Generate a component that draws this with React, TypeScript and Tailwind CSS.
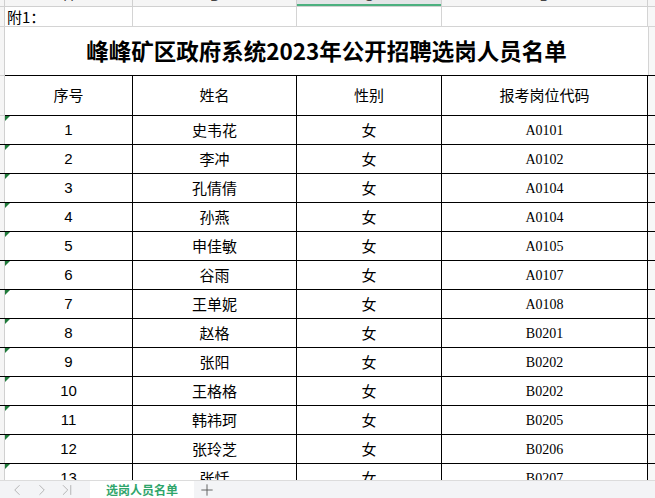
import React from "react";
import { ChevronLeft, ChevronRight, ChevronLast, Plus } from "lucide-react";

type Row = { no: string; name: string; sex: string; code: string };

const rows: Row[] = [
    { no: "1", name: "史韦花", sex: "女", code: "A0101" },
    { no: "2", name: "李冲", sex: "女", code: "A0102" },
    { no: "3", name: "孔倩倩", sex: "女", code: "A0104" },
    { no: "4", name: "孙燕", sex: "女", code: "A0104" },
    { no: "5", name: "申佳敏", sex: "女", code: "A0105" },
    { no: "6", name: "谷雨", sex: "女", code: "A0107" },
    { no: "7", name: "王单妮", sex: "女", code: "A0108" },
    { no: "8", name: "赵格", sex: "女", code: "B0201" },
    { no: "9", name: "张阳", sex: "女", code: "B0202" },
    { no: "10", name: "王格格", sex: "女", code: "B0202" },
    { no: "11", name: "韩祎珂", sex: "女", code: "B0205" },
    { no: "12", name: "张玲芝", sex: "女", code: "B0206" },
    { no: "13", name: "张恬", sex: "女", code: "B0207" },
];

const cjk = "font-['Noto_Sans_CJK_SC',sans-serif]";

const App: React.FC = () => {
    return (
        <div className={`w-[655px] h-[498px] overflow-hidden flex flex-col bg-white text-black ${cjk}`}>
            {/* column letters, scrolled mostly out of view */}
            <div className="flex h-[7px] shrink-0 overflow-hidden border-b border-[#d0d0d0] bg-[#f5f5f5] text-[13px] text-[#444] font-['Liberation_Sans',sans-serif]">
                <div className="w-[5px] border-r border-[#d0d0d0]" />
                <div className="w-[128px] border-r border-[#d0d0d0]"><div className="-mt-[13px] h-[20px] flex items-center justify-center">A</div></div>
                <div className="w-[164px] border-r border-[#d0d0d0]"><div className="-mt-[13px] h-[20px] flex items-center justify-center">B</div></div>
                <div className="w-[145px] border-r border-[#d0d0d0] bg-[#e3e5e7] relative">
                    <div className="-mt-[13px] h-[20px] flex items-center justify-center">C</div>
                    <div className="absolute left-0 right-0 bottom-0 h-[2px] bg-[#4cb07f]" />
                </div>
                <div className="w-[206px] border-r border-[#d0d0d0]"><div className="-mt-[13px] h-[20px] flex items-center justify-center">D</div></div>
                <div className="flex-1" />
            </div>

            {/* row 1 */}
            <div className="flex h-[20px] shrink-0 border-b border-[#d4d4d4]">
                <div className="w-[5px] border-r border-[#d0d0d0] bg-[#f5f5f5]" />
                <div className="w-[128px] border-r border-[#d4d4d4] pl-[2px] text-[15px] leading-[19px]">附1：</div>
                <div className="w-[164px] border-r border-[#d4d4d4]" />
                <div className="w-[145px] border-r border-[#d4d4d4]" />
                <div className="w-[206px] border-r border-[#d4d4d4]" />
                <div className="flex-1 bg-[#f7f7f7]" />
            </div>

            {/* title */}
            <div className="flex h-[48px] shrink-0">
                <div className="w-[5px] border-r border-[#d0d0d0] bg-[#f5f5f5]" />
                <div className="w-[643px] flex items-center justify-center text-[22.5px] font-bold">
                    峰峰矿区政府系统2023年公开招聘选岗人员名单
                </div>
                <div className="flex-1 border-l border-[#d4d4d4] bg-[#f7f7f7]" />
            </div>

            {/* table */}
            <div className="flex-1 overflow-hidden">
                <div className="flex h-[41px] border-y border-black">
                    <div className="w-[5px] -my-px border-y border-[#d0d0d0] border-r bg-[#f5f5f5]" />
                    <div className="w-[128px] border-r border-black flex items-center justify-center text-[15px]">序号</div>
                    <div className="w-[164px] border-r border-black flex items-center justify-center text-[15px]">姓名</div>
                    <div className="w-[145px] border-r border-black flex items-center justify-center text-[15px]">性别</div>
                    <div className="w-[206px] border-r border-black flex items-center justify-center text-[15px]">报考岗位代码</div>
                    <div className="flex-1 bg-[#f7f7f7]" />
                </div>
                {rows.map((r) => (
                    <div key={r.no} className="flex h-[29px] border-b border-black">
                        <div className="w-[5px] border-r border-[#d0d0d0] bg-[#f5f5f5]" />
                        <div className="relative w-[128px] border-r border-black flex items-center justify-center text-[15px] font-['Liberation_Sans',sans-serif]">
                            <div className="absolute left-0 top-0 w-0 h-0 border-t-[5px] border-r-[5px] border-t-[#1f7a3a] border-r-transparent" />
                            {r.no}
                        </div>
                        <div className="w-[164px] border-r border-black flex items-center justify-center text-[15px]">{r.name}</div>
                        <div className="w-[145px] border-r border-black flex items-center justify-center text-[15px]">{r.sex}</div>
                        <div className="w-[206px] border-r border-black flex items-center justify-center text-[14px] font-['Liberation_Serif',serif]">{r.code}</div>
                        <div className="flex-1 bg-[#f7f7f7]" />
                    </div>
                ))}
            </div>

            {/* sheet tabs */}
            <div className="flex h-[18px] shrink-0 items-stretch border-t border-[#dcdcdc] bg-[#f3f4f6]">
                <div className="w-[90px] flex items-center gap-[7px] pl-[8px] text-[#a8a8a8]">
                    <ChevronLeft size={18} strokeWidth={1.1} />
                    <ChevronRight size={18} strokeWidth={1.1} />
                    <ChevronLast size={18} strokeWidth={1.1} />
                </div>
                <div className="w-[104px] bg-white flex items-center justify-center text-[12px] font-bold text-[#2fa56b]">
                    选岗人员名单
                </div>
                <div className="ml-[4px] flex items-center text-[#555]">
                    <Plus size={18} strokeWidth={1.2} />
                </div>
            </div>
        </div>
    );
};

export default App;
